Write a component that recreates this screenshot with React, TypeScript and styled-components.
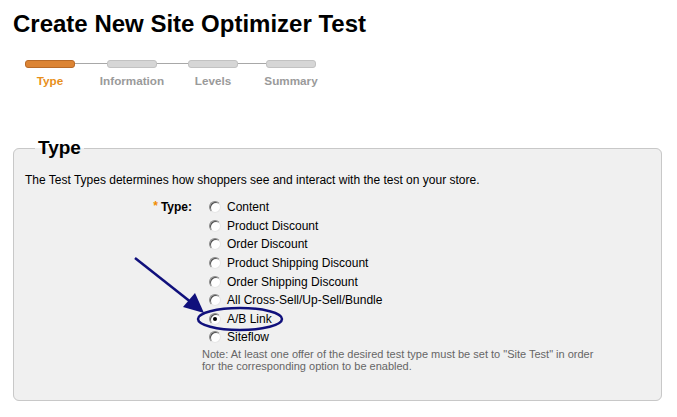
import React from "react";
import styled, { createGlobalStyle } from "styled-components";

const Global = createGlobalStyle`
  html, body { margin: 0; padding: 0; background: #fff; }
  body { font-family: "Liberation Sans", Arial, sans-serif; color: #000; }
`;

const Page = styled.div`
  position: relative;
  width: 677px;
  height: 417px;
  padding-top: 10px;
  box-sizing: border-box;
  overflow: hidden;
`;

const Title = styled.h1`
  margin: 0 0 0 13px;
  font-size: 24px;
  line-height: 28px;
  font-weight: bold;
  color: #000;
`;

const Stepper = styled.div`
  display: flex;
  margin: 22px 0 0 9px;
`;

const Step = styled.div<{ $w: number; $first?: boolean; $last?: boolean }>`
  position: relative;
  width: ${(p) => p.$w}px;
  display: flex;
  flex-direction: column;
  align-items: center;
  &::before {
    content: "";
    position: absolute;
    top: 3px;
    height: 1px;
    background: #a8a8a8;
    left: ${(p) => (p.$first ? "50%" : "0")};
    right: ${(p) => (p.$last ? "50%" : "0")};
  }
`;

const Bar = styled.div<{ $active?: boolean }>`
  position: relative;
  width: 50px;
  height: 8px;
  box-sizing: border-box;
  border-radius: 3px;
  background: ${(p) => (p.$active ? "#dc8434" : "#d6d6d6")};
  border: 1px solid ${(p) => (p.$active ? "#b86a28" : "#c2c2c2")};
`;

const StepLabel = styled.div<{ $active?: boolean }>`
  margin-top: 6px;
  font-size: 11.7px;
  line-height: 14px;
  font-weight: bold;
  color: ${(p) => (p.$active ? "#e8901a" : "#9a9a9a")};
`;

const Box = styled.fieldset`
  margin: 49px 15px 0 13px;
  padding: 0 11px 28px 11px;
  border: 1px solid #c8c8c8;
  border-radius: 6px;
  background: #f0f0f0;
  min-width: 0;
`;

const Legend = styled.legend`
  margin-left: 10px;
  padding: 0 3px;
  font-size: 19px;
  line-height: 22px;
  font-weight: bold;
  color: #000;
`;

const Desc = styled.p`
  margin: 14px 0 0 0;
  font-size: 12px;
  line-height: 14px;
  color: #000;
`;

const FormRow = styled.div`
  display: grid;
  grid-template-columns: 177px 1fr;
  margin-top: 11px;
`;

const FieldLabel = styled.div`
  height: 18.5px;
  display: flex;
  align-items: center;
  justify-content: flex-end;
  padding-right: 10px;
  font-size: 12px;
  font-weight: bold;
`;

const Req = styled.span`
  color: #f08c00;
  margin-right: 3px;
  position: relative;
  top: -1px;
`;

const Options = styled.div`
  display: flex;
  flex-direction: column;
`;

const Option = styled.label`
  height: 18.6px;
  display: flex;
  align-items: center;
  padding-left: 7px;
  font-size: 12px;
  color: #000;
`;

const Radio = styled.span<{ $checked?: boolean }>`
  position: relative;
  width: 12px;
  height: 12px;
  box-sizing: border-box;
  border-radius: 50%;
  background: #fff;
  border: 1px solid;
  border-color: #8a8a8a #e6e6e6 #e6e6e6 #8a8a8a;
  box-shadow: inset 1px 1px 0 #505050;
  margin-right: 6px;
  flex: none;
  &::after {
    content: "";
    display: ${(p) => (p.$checked ? "block" : "none")};
    position: absolute;
    width: 4px;
    height: 4px;
    border-radius: 50%;
    background: #000;
    left: 3px;
    top: 3px;
  }
`;

const Note = styled.p`
  grid-column: 2;
  margin: 1px 0 0 0;
  font-size: 11px;
  line-height: 12px;
  color: #666;
`;

const Overlay = styled.svg`
  position: absolute;
  left: 0;
  top: 0;
  pointer-events: none;
`;

const steps = [
  { label: "Type", w: 82 },
  { label: "Information", w: 82 },
  { label: "Levels", w: 80 },
  { label: "Summary", w: 76 },
];

const options = [
  "Content",
  "Product Discount",
  "Order Discount",
  "Product Shipping Discount",
  "Order Shipping Discount",
  "All Cross-Sell/Up-Sell/Bundle",
  "A/B Link",
  "Siteflow",
];

export default function App() {
  return (
    <Page>
      <Global />
      <Title>Create New Site Optimizer Test</Title>
      <Stepper>
        {steps.map((s, i) => (
          <Step key={s.label} $w={s.w} $first={i === 0} $last={i === steps.length - 1}>
            <Bar $active={i === 0} />
            <StepLabel $active={i === 0}>{s.label}</StepLabel>
          </Step>
        ))}
      </Stepper>
      <Box>
        <Legend>Type</Legend>
        <Desc>The Test Types determines how shoppers see and interact with the test on your store.</Desc>
        <FormRow>
          <FieldLabel>
            <Req>*</Req>Type:
          </FieldLabel>
          <Options>
            {options.map((o) => (
              <Option key={o}>
                <Radio $checked={o === "A/B Link"} />
                {o}
              </Option>
            ))}
          </Options>
          <Note>
            Note: At least one offer of the desired test type must be set to "Site Test" in order
            <br />
            for the corresponding option to be enabled.
          </Note>
        </FormRow>
      </Box>
      <Overlay width="677" height="417" viewBox="0 0 677 417">
        <line x1="135" y1="258" x2="192" y2="303" stroke="#10107c" strokeWidth="2.5" />
        <polygon points="204,313 183,307 195,293" fill="#10107c" />
        <ellipse cx="240" cy="319" rx="42" ry="11" fill="none" stroke="#10107c" strokeWidth="2.5" />
      </Overlay>
    </Page>
  );
}
